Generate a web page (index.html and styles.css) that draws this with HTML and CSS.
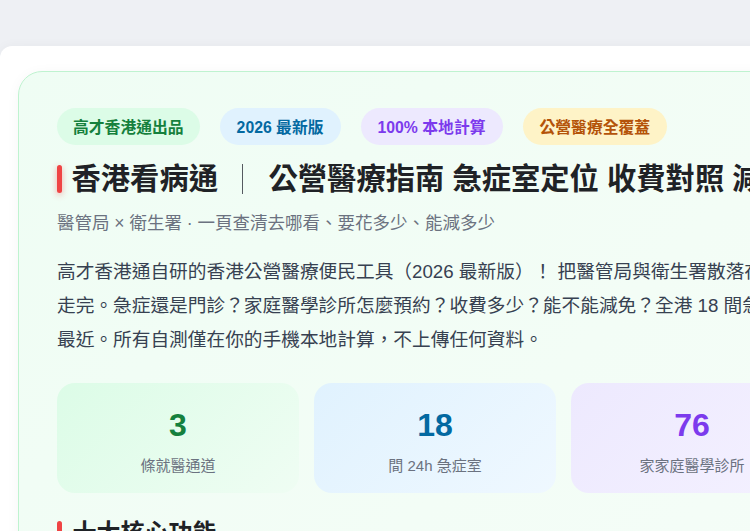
FILE: index.html
```html
<!DOCTYPE html>
<html lang="zh-Hant">
<head>
<meta charset="utf-8">
<title>香港看病通</title>
<link rel="stylesheet" href="styles.css">
</head>
<body>
<div class="topbar"></div>
<main class="panel">
  <section class="hero">
    <div class="badges">
      <span class="badge badge-green">高才香港通出品</span>
      <span class="badge badge-blue">2026 最新版</span>
      <span class="badge badge-purple">100% 本地計算</span>
      <span class="badge badge-amber">公營醫療全覆蓋</span>
    </div>
    <h1 class="title"><span class="title-mark"></span>香港看病通<span class="title-sep"></span>公營醫療指南 急症室定位 收費對照 減免申請</h1>
    <p class="subtitle">醫管局 × 衛生署 · 一頁查清去哪看、要花多少、能減多少</p>
    <p class="intro">高才香港通自研的香港公營醫療便民工具（2026 最新版）！ 把醫管局與衛生署散落在各處的就醫資訊整合成一頁，一次<br>走完。急症還是門診？家庭醫學診所怎麼預約？收費多少？能不能減免？全港 18 間急症室哪間離你<br>最近。所有自測僅在你的手機本地計算，不上傳任何資料。</p>
    <div class="stats">
      <div class="stat stat-green"><div class="stat-num">3</div><div class="stat-label">條就醫通道</div></div>
      <div class="stat stat-blue"><div class="stat-num">18</div><div class="stat-label">間 24h 急症室</div></div>
      <div class="stat stat-purple"><div class="stat-num">76</div><div class="stat-label">家家庭醫學診所</div></div>
      <div class="stat stat-amber"><div class="stat-num">100%</div><div class="stat-label">本地計算</div></div>
    </div>
    <h2 class="section-title"><span class="section-mark"></span>十大核心功能</h2>
  </section>
</main>
</body>
</html>
```
FILE: styles.css
```css
html, body {
  margin: 0;
  padding: 0;
  overflow: hidden;
  height: 531px;
}
body {
  background: #eef0f4;
  font-family: "Liberation Sans", "Noto Sans CJK SC", "Noto Sans CJK TC", sans-serif;
  color: #1f2328;
  width: 750px;
}
.topbar {
  height: 46px;
}
.panel {
  width: 1200px;
  background: #ffffff;
  border-top-left-radius: 12px;
  padding: 25px 0 40px 18px;
  box-shadow: 0 0 12px rgba(0, 0, 0, 0.04);
}
.hero {
  width: 1090px;
  border: 1px solid #bff3d0;
  border-radius: 24px;
  background: linear-gradient(135deg, #effdf4 0%, #f3fdf6 50%, #f6fdf9 100%);
  padding: 36px 38px 40px 38px;
  box-shadow: 0 2px 14px rgba(0, 0, 0, 0.04);
}
.badges {
  display: flex;
  gap: 20px;
}
.badge {
  display: inline-flex;
  align-items: center;
  height: 37px;
  padding: 0 16px;
  border-radius: 19px;
  font-size: 15.8px;
  font-weight: 700;
  white-space: nowrap;
}
.badge-blue, .badge-purple, .badge-amber { padding: 0 17px; }
.badge-green { background: #dcfce7; color: #15803d; }
.badge-blue { background: #e0f2fe; color: #0369a1; }
.badge-purple { background: #ede9fe; color: #7c3aed; }
.badge-amber { background: #fef3c7; color: #b45309; }

.title {
  margin: 15px 0 0 0;
  font-size: 29.3px;
  line-height: 38px;
  font-weight: 700;
  color: #1f2226;
  white-space: nowrap;
  display: flex;
  align-items: center;
}
.title-mark {
  display: inline-block;
  width: 4.5px;
  height: 28px;
  border-radius: 3px;
  background: #ef4444;
  box-shadow: 0 2px 6px rgba(239, 68, 68, 0.45);
  margin-right: 10px;
}
.title-sep {
  display: inline-block;
  width: 1.5px;
  height: 30px;
  background: #555a60;
  margin: 0 25px 0 24px;
}
.subtitle {
  margin: 13px 0 0 0;
  font-size: 17.5px;
  line-height: 25px;
  color: #6b7280;
  white-space: nowrap;
}
.intro {
  margin: 19px 0 0 0;
  font-size: 18.7px;
  line-height: 34px;
  color: #374151;
  white-space: nowrap;
}
.stats {
  margin-top: 26px;
  display: flex;
  gap: 15px;
}
.stat {
  width: 242px;
  height: 110px;
  box-sizing: border-box;
  border-radius: 18px;
  padding-top: 22px;
  text-align: center;
}
.stat-green { background: linear-gradient(135deg, #dcfce7 0%, #effdf3 100%); }
.stat-blue { background: linear-gradient(135deg, #e0f2fe 0%, #eff8ff 100%); }
.stat-purple { background: linear-gradient(135deg, #ede9fe 0%, #f4f1ff 100%); }
.stat-amber { background: linear-gradient(135deg, #fef3c7 0%, #fffaea 100%); }
.stat-num {
  font-size: 32px;
  line-height: 40px;
  font-weight: 700;
}
.stat-green .stat-num { color: #15803d; }
.stat-blue .stat-num { color: #0369a1; }
.stat-purple .stat-num { color: #7c3aed; }
.stat-amber .stat-num { color: #b45309; }
.stat-label {
  margin-top: 10px;
  font-size: 15px;
  line-height: 21px;
  color: #6b7280;
}
.section-title {
  margin: 24px 0 0 0;
  font-size: 24px;
  line-height: 32px;
  font-weight: 700;
  color: #1f2226;
  display: flex;
  align-items: center;
}
.section-mark {
  display: inline-block;
  width: 4.5px;
  height: 24px;
  border-radius: 3px;
  background: #ef4444;
  margin-right: 11px;
}
```
